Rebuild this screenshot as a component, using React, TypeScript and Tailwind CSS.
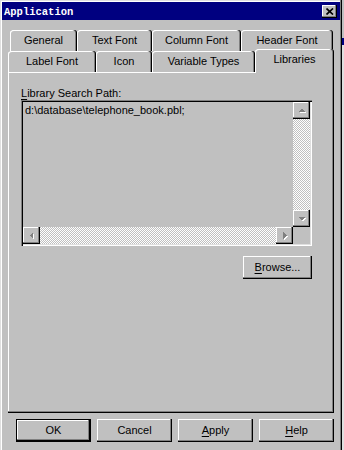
import type { ReactNode } from "react";

const raised =
  "shadow-[inset_-1px_-1px_0_#000,inset_-2px_-2px_0_#808080,inset_1px_1px_0_#fff]";

function Arrow({ dir }: { dir: "up" | "down" | "left" | "right" }) {
  const paths: Record<string, string> = {
    up: "M1 6h7L4.5 2.5z",
    down: "M1 3h7L4.5 6.5z",
    left: "M6 1v7L2.5 4.5z",
    right: "M3 1v7L6.5 4.5z",
  };
  return (
    <svg width="10" height="10" viewBox="0 0 10 10" shapeRendering="crispEdges">
      <path d={paths[dir]} fill="#fff" transform="translate(1 1)" />
      <path d={paths[dir]} fill="#808080" />
    </svg>
  );
}

function ScrollButton({ dir }: { dir: "up" | "down" | "left" | "right" }) {
  return (
    <div className={`flex h-[17px] w-[17px] shrink-0 items-center justify-center bg-[#c0c0c0] ${raised}`}>
      <Arrow dir={dir} />
    </div>
  );
}

function Tab({ label, w, selected }: { label: string; w: string; selected?: boolean }) {
  return (
    <div
      className={`flex ${w} items-center justify-center rounded-t-[3px] bg-[#c0c0c0] shadow-[inset_-1px_0_0_#000,inset_-2px_0_0_#808080,inset_1px_1px_0_#fff] ${
        selected ? "relative z-10 mb-[-1px] h-[24px] pb-[3px]" : "h-full"
      }`}
    >
      {label}
    </div>
  );
}

function Button({ children, def, w = "w-[75px]" }: { children: ReactNode; def?: boolean; w?: string }) {
  return (
    <div
      className={`flex h-[23px] ${w} items-center justify-center bg-[#c0c0c0] ${
        def
          ? "border border-black shadow-[inset_-1px_-1px_0_#000,inset_-2px_-2px_0_#808080,inset_1px_1px_0_#fff]"
          : raised
      }`}
    >
      {children}
    </div>
  );
}

export default function App() {
  return (
    <div className="flex h-[450px] w-[344px] overflow-hidden bg-[#c0c0c0] font-['Liberation_Sans',Arial,sans-serif] text-[11px] text-black">
      {/* Window */}
      <div className="flex h-[456px] w-[342px] shrink-0 flex-col p-[2px] shadow-[inset_-1px_-1px_0_#000,inset_-2px_-2px_0_#808080,inset_1px_1px_0_#dfdfdf,inset_2px_2px_0_#fff]">
        {/* Title bar */}
        <div className="flex h-[18px] items-center justify-between bg-[#000080] pl-[2px] pr-[3px]">
          <span className="pt-[2px] font-['Liberation_Mono',monospace] text-[10.5px] font-bold leading-none text-white">
            Application
          </span>
          <div className={`flex h-[13px] w-[15px] items-center justify-center bg-[#c0c0c0] ${raised}`}>
            <svg width="8" height="7" viewBox="0 0 8 7">
              <path d="M0.5 0.5L7 6.5M7 0.5L0.5 6.5" stroke="#000" strokeWidth="1.7" />
            </svg>
          </div>
        </div>

        {/* Tabs */}
        <div className="mt-[10px] ml-[8px] flex h-[21px]">
          <Tab label="General" w="w-[67px]" />
          <Tab label="Text Font" w="w-[75px]" />
          <Tab label="Column Font" w="w-[89px]" />
          <Tab label="Header Font" w="w-[92px]" />
        </div>
        <div className="ml-[6px] flex h-[21px] items-end">
          <Tab label="Label Font" w="w-[88px]" />
          <Tab label="Icon" w="w-[56px]" />
          <Tab label="Variable Types" w="w-[103px]" />
          <Tab label="Libraries" w="w-[79px]" selected />
        </div>

        {/* Panel */}
        <div className="ml-[6px] flex h-[341px] w-[326px] flex-col pl-[13px] pt-[14px] shadow-[inset_-1px_-1px_0_#000,inset_-2px_-2px_0_#808080,inset_1px_1px_0_#fff]">
          <div className="h-[14px] leading-[14px]">
            <span className="underline underline-offset-[2px]">L</span>ibrary Search Path:
          </div>

          {/* List box */}
          <div className="flex h-[146px] w-[291px] flex-col p-[2px] shadow-[inset_1px_1px_0_#808080,inset_2px_2px_0_#000,inset_-1px_-1px_0_#fff,inset_-2px_-2px_0_#dfdfdf]">
            <div className="flex flex-1">
              <div className="flex-1 pl-[2px] leading-[16px]">d:\database\telephone_book.pbl;</div>
              <div className="flex w-[17px] flex-col">
                <ScrollButton dir="up" />
                <div className="flex-1 bg-[image:repeating-conic-gradient(#fff_0_25%,#c0c0c0_0_50%)] bg-[length:2px_2px]" />
                <ScrollButton dir="down" />
              </div>
            </div>
            <div className="flex h-[17px]">
              <ScrollButton dir="left" />
              <div className="flex-1 bg-[image:repeating-conic-gradient(#fff_0_25%,#c0c0c0_0_50%)] bg-[length:2px_2px]" />
              <ScrollButton dir="right" />
              <div className="w-[17px]" />
            </div>
          </div>

          <div className="mt-[10px] flex w-[291px] justify-end">
            <Button w="w-[69px]">
              <span>
                <span className="underline underline-offset-[2px]">B</span>rowse...
              </span>
            </Button>
          </div>
        </div>

        {/* Dialog buttons */}
        <div className="mt-[6px] flex gap-[6px] pl-[14px]">
          <Button def>OK</Button>
          <Button>Cancel</Button>
          <Button>
            <span>
              <span className="underline underline-offset-[2px]">A</span>pply
            </span>
          </Button>
          <Button>
            <span>
              <span className="underline underline-offset-[2px]">H</span>elp
            </span>
          </Button>
        </div>
      </div>

      {/* Edge of the window behind */}
      <div className="flex w-[2px] flex-col">
        <div className="h-[38px] bg-[#c0c0c0]" />
        <div className="h-[7px] bg-[#000080]" />
        <div className="flex-1 bg-[#dfdfdf]" />
      </div>
    </div>
  );
}
